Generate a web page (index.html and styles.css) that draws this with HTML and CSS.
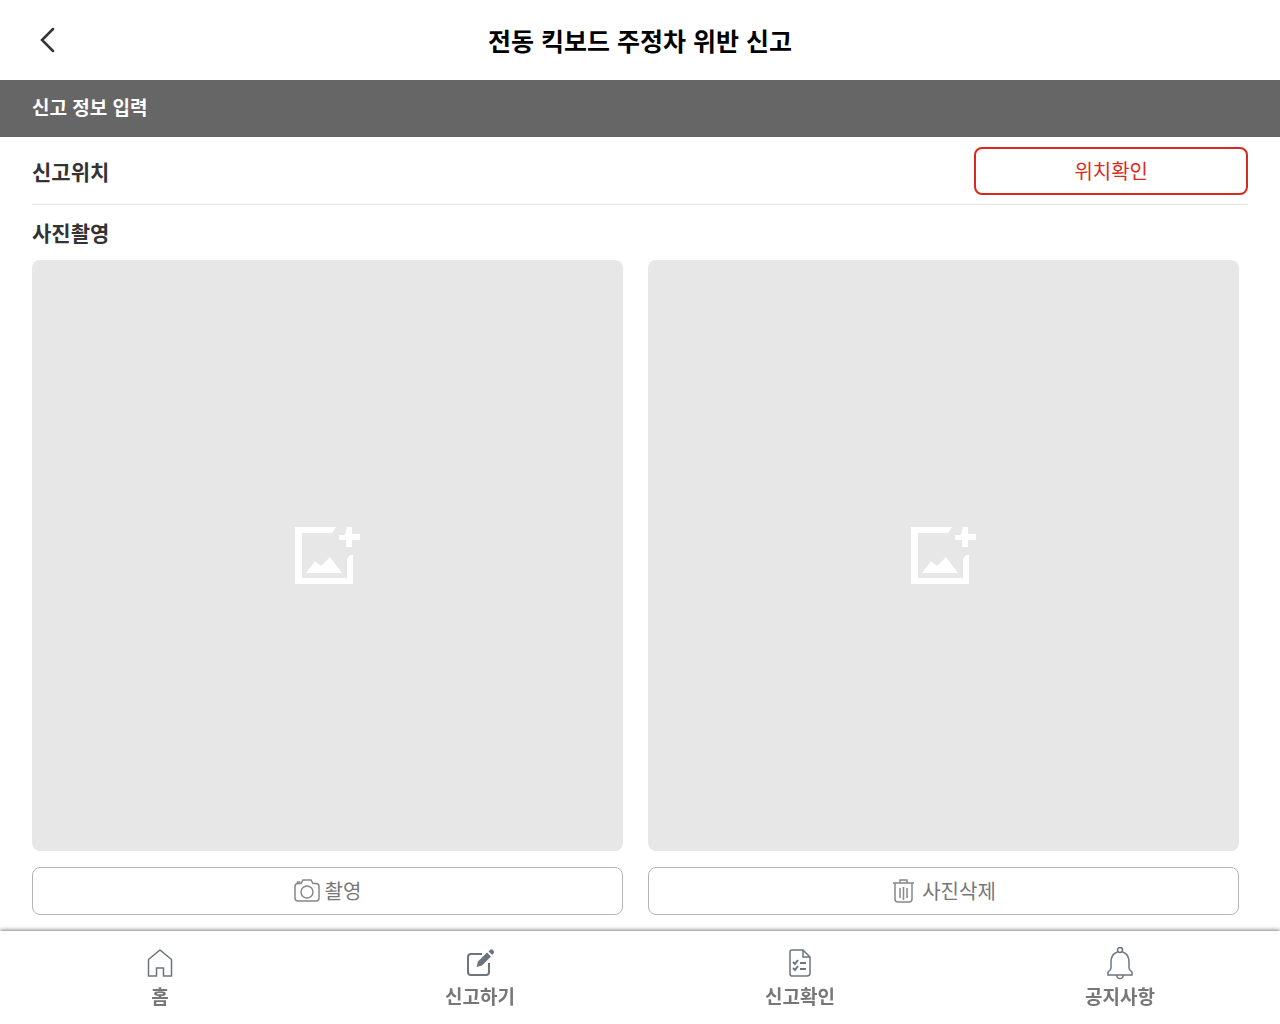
FILE: index.html
```html
<!DOCTYPE html>
<html lang="ko">
<head>
    <meta charset="UTF-8">
    <meta name="viewport" content="width=device-width, initial-scale=1.0">
    <title>전동 킥보드 주정차 위반 신고</title>
    <link rel="stylesheet" href="styles.css">
</head>
<body>
    <header class="header">
        <button type="button" class="back" aria-label="뒤로">
            <svg width="16" height="26" viewBox="0 0 16 26"><path d="M13 2 L2 13 L13 24"/></svg>
        </button>
        <h1>전동 킥보드 주정차 위반 신고</h1>
    </header>

    <main>
        <h2 class="section-title">신고 정보 입력</h2>
        <div class="content">
            <div class="row">
                <h3>신고위치</h3>
                <button type="button" class="btn btn-location">위치확인</button>
            </div>
            <h3 class="photo-title">사진촬영</h3>
            <div class="photos">
                <div class="photo-item">
                    <div class="photo">
                        <svg width="66" height="58" viewBox="0 0 66 58">
                            <path d="M0 0H41L37 6H7V51H52V32L55 28H58V57H0Z"/>
                            <path d="M11 46L20 34L26 39L35 30L47 46Z"/>
                            <path d="M52 0H57V7H65V13H57V20H51V13H44V8H50Z"/>
                        </svg>
                    </div>
                    <button type="button" class="btn">
                        <svg width="26" height="26" viewBox="0 0 26 26">
                            <path d="M4 5.500H7L9 2H17L19 5.500H22Q25 5.500 25 8.500V20Q25 23 22 23H4Q1 23 1 20V8.500Q1 5.500 4 5.500Z"/>
                            <path d="M3.500 5.500V4H6.500"/>
                            <circle cx="13" cy="14" r="6"/>
                        </svg>
                        <span>촬영</span>
                    </button>
                </div>
                <div class="photo-item">
                    <div class="photo">
                        <svg width="66" height="58" viewBox="0 0 66 58">
                            <path d="M0 0H41L37 6H7V51H52V32L55 28H58V57H0Z"/>
                            <path d="M11 46L20 34L26 39L35 30L47 46Z"/>
                            <path d="M52 0H57V7H65V13H57V20H51V13H44V8H50Z"/>
                        </svg>
                    </div>
                    <button type="button" class="btn">
                        <svg width="26" height="26" viewBox="0 0 26 26">
                            <path d="M2 5H23M9 5V2H16V5M4 5V21Q4 24 7 24H18Q21 24 21 21V5"/>
                            <path d="M9 10V20M12.500 9V22M16 10V20"/>
                        </svg>
                        <span>사진삭제</span>
                    </button>
                </div>
            </div>
        </div>
    </main>

    <nav class="nav">
        <a href="#">
            <svg width="32" height="32" viewBox="0 0 32 32">
                <path d="M4.500 12.500L16 3L27.500 12.500V29H19.500V21H12.500V29H4.500Z"/>
            </svg>
            <span>홈</span>
        </a>
        <a href="#">
            <svg width="32" height="32" viewBox="0 0 32 32">
                <path class="thick" d="M18 7H7Q4 7 4 10V25Q4 28 7 28H22Q25 28 25 25V16"/>
                <path class="fill" d="M12.500 20L14 14.500L23 5.500L27 9.500L18 18.500Z"/>
                <path class="fill" d="M24.500 4.500L26 3Q27.500 1.500 29.300 3.300Q31 5 29.500 6.500L28.300 8Z"/>
            </svg>
            <span>신고하기</span>
        </a>
        <a href="#">
            <svg width="32" height="32" viewBox="0 0 32 32">
                <path d="M8 3H19L26 10V26Q26 29 23 29H8Q6 29 6 27V5Q6 3 8 3Z"/>
                <path d="M19 3V10H26"/>
                <path class="thick" d="M9 15L11 17L14 13M16 16H22M9 21L11 23L14 19M16 22H22"/>
            </svg>
            <span>신고확인</span>
        </a>
        <a href="#">
            <svg width="32" height="32" viewBox="0 0 32 32">
                <circle cx="16" cy="3" r="2.500"/>
                <path d="M13.500 5Q7 7 7 15V21Q7 23 4 25V28H28V25Q25 23 25 21V15Q25 7 18.500 5"/>
                <path d="M12.500 28Q13 31.500 16 31.500Q19 31.500 19.500 28"/>
            </svg>
            <span>공지사항</span>
        </a>
    </nav>
</body>
</html>
```

FILE: styles.css
```css
* {
    box-sizing: border-box;
}
body {
    margin: 0;
    padding-bottom: 93px;
    background: #fff;
    color: #333;
    font-family: "Noto Sans CJK KR", sans-serif;
}
h1, h2, h3 {
    margin: 0;
}
svg {
    fill: none;
    stroke: currentColor;
    stroke-width: 1.5;
    flex-shrink: 0;
}
.header {
    display: grid;
    grid-template-columns: 64px 1fr 64px;
    align-items: center;
    height: 80px;
}
.header h1 {
    color: #000;
    font-size: 25px;
    line-height: 40px;
    font-weight: 700;
    text-align: center;
}
.back {
    display: flex;
    justify-content: flex-end;
    padding: 0 8px;
    background: none;
    border: 0;
    color: #333;
    cursor: pointer;
}
.back svg {
    stroke-width: 2.5;
    stroke-linecap: round;
}
.section-title {
    padding: 11px 32px 14px;
    background: #666;
    color: #fff;
    font-size: 19px;
    line-height: 32px;
    font-weight: 700;
}
.content {
    padding: 0 32px;
}
.row {
    display: flex;
    justify-content: space-between;
    align-items: center;
    height: 68px;
    border-bottom: 1px solid #e5e5e5;
}
h3 {
    font-size: 21px;
    line-height: 32px;
    font-weight: 700;
}
.btn {
    display: flex;
    justify-content: center;
    align-items: center;
    gap: 5px;
    width: 100%;
    height: 48px;
    padding: 0;
    background: #fff;
    border: 1px solid #b5b5b5;
    border-radius: 8px;
    color: #777;
    font-family: inherit;
    font-size: 20px;
    line-height: 32px;
    cursor: pointer;
}
.btn svg {
    color: #888;
}
.btn-location {
    width: 22.5%;
    border: 2px solid #d9291c;
    color: #d9291c;
}
.photo-title {
    padding: 11px 0 12px;
}
.photos {
    display: grid;
    grid-template-columns: 1fr 1fr;
    gap: 25px;
    padding-right: 9px;
}
.photo {
    display: flex;
    justify-content: center;
    align-items: center;
    aspect-ratio: 1;
    margin-bottom: 16px;
    background: #e7e7e7;
    border-radius: 8px;
}
.photo svg {
    fill: #fff;
    stroke: none;
}
.nav {
    position: fixed;
    left: 0;
    right: 0;
    bottom: 0;
    display: flex;
    height: 93px;
    background: #fff;
    box-shadow: 0 -1px 4px rgba(0, 0, 0, 0.5);
}
.nav a {
    flex: 1;
    display: flex;
    flex-direction: column;
    align-items: center;
    padding-top: 16px;
    color: #777;
    font-size: 19px;
    line-height: 34px;
    font-weight: 700;
    text-decoration: none;
}
.nav svg {
    color: #6c757d;
    overflow: visible;
}
.nav .thick {
    stroke-width: 2;
}
.nav .fill {
    fill: currentColor;
    stroke: none;
}
```
